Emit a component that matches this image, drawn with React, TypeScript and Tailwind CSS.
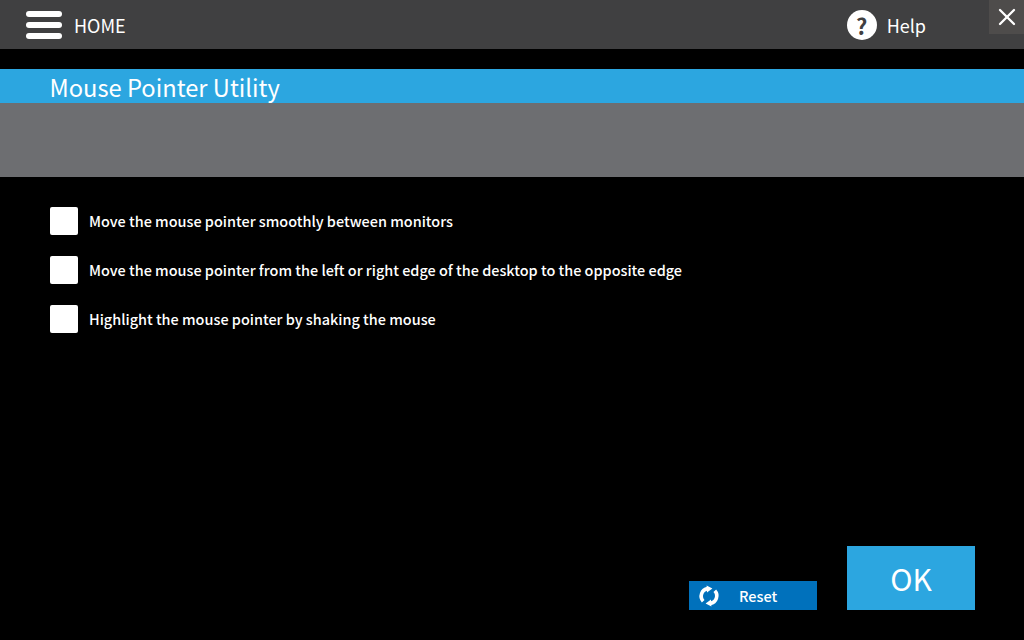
import { X } from "lucide-react";

const options = [
  "Move the mouse pointer smoothly between monitors",
  "Move the mouse pointer from the left or right edge of the desktop to the opposite edge",
  "Highlight the mouse pointer by shaking the mouse",
];

function ResetIcon() {
  return (
    <svg width="22" height="22" viewBox="0 0 22 22" fill="none">
      <path d="M5.2 16.2A7.6 7.6 0 0 1 9.6 3.6" stroke="white" strokeWidth="3.6" />
      <path d="M16.8 5.8A7.6 7.6 0 0 1 12.4 18.4" stroke="white" strokeWidth="3.6" />
      <path d="M8.6 0.4L14.4 3.4L9 7.6Z" fill="white" />
      <path d="M13.4 21.6L7.6 18.6L13 14.4Z" fill="white" />
    </svg>
  );
}

export default function App() {
  return (
    <div className="relative flex h-[640px] w-[1024px] flex-col overflow-hidden bg-black font-['Noto_Sans_CJK_JP',sans-serif] text-white">
      <header className="flex h-[49px] items-center bg-[#404041]">
        <div className="ml-[26px] flex w-[36px] flex-col gap-[5px]">
          <span className="h-[6px] rounded-full bg-white" />
          <span className="h-[6px] rounded-full bg-white" />
          <span className="h-[6px] rounded-full bg-white" />
        </div>
        <span className="ml-[12px] text-[18px] leading-[26px]">HOME</span>
        <div className="ml-auto mr-[98px] flex items-center">
          <span className="flex h-[30px] w-[30px] items-center justify-center rounded-full bg-white text-[22px] font-bold leading-none text-[#404041]">
            ?
          </span>
          <span className="ml-[10px] text-[18px] leading-[26px]">Help</span>
        </div>
      </header>
      <button className="absolute right-0 top-0 flex h-[34px] w-[35px] items-center justify-center bg-[#4e4c4b]">
        <X size={28} strokeWidth={2} color="white" />
      </button>

      <div className="mt-[20px] flex h-[34px] items-center bg-[#2ca6e0] pl-[49.5px] pt-[2px] text-[23.7px] leading-[32px]">
        Mouse Pointer Utility
      </div>
      <div className="h-[74px] bg-[#6d6e71]" />

      <div className="mt-[30px] flex flex-col gap-[21px] pl-[50px]">
        {options.map((label) => (
          <label key={label} className="flex h-[28px] items-center">
            <span className="h-[28px] w-[28px] rounded-[2px] bg-white" />
            <span className="ml-[11px] text-[14.45px] font-medium leading-[22px]">{label}</span>
          </label>
        ))}
      </div>

      <div className="mt-auto mb-[30px] mr-[49px] flex items-end justify-end gap-[30px]">
        <button className="flex h-[29px] w-[128px] items-center bg-[#0071bc] pl-[9px] text-[14.5px]">
          <ResetIcon />
          <span className="ml-[19px] font-medium leading-[22px]">Reset</span>
        </button>
        <button className="flex h-[64px] w-[128px] items-center justify-center bg-[#2ca6e0] text-[30px] leading-[40px]">
          OK
        </button>
      </div>
    </div>
  );
}
